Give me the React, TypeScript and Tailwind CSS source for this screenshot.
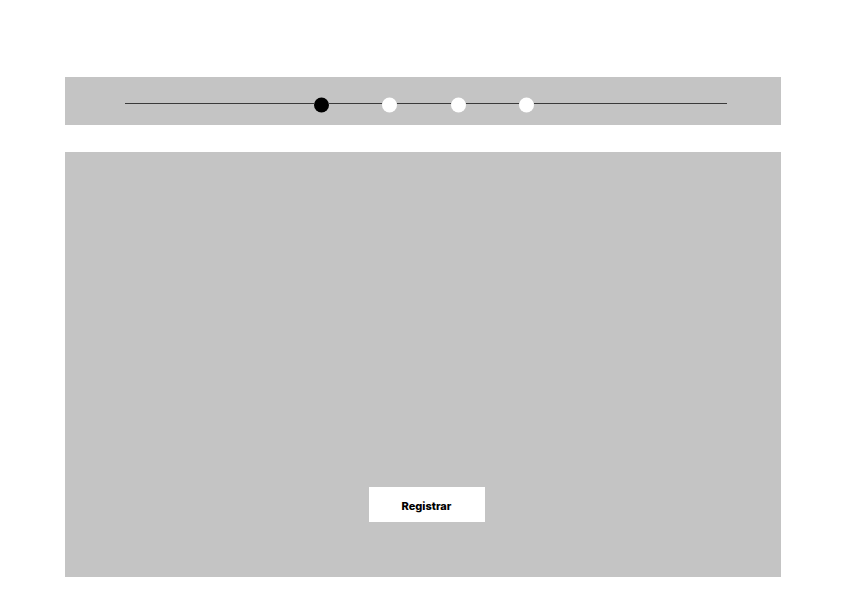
export default function App() {
  return (
    <div className="min-h-screen bg-white pt-[77px]" style={{ fontFamily: 'Inter, "Liberation Sans", sans-serif' }}>
      <div className="mx-[65px] w-[716px]">
        {/* Step progress bar */}
        <div className="flex h-[48px] items-center bg-[#c4c4c4] pl-[60px] pt-[4px]">
          <div className="h-px w-[189px] bg-[#3a3a3a]" />
          <div className="h-[15px] w-[15px] translate-y-[1.5px] rounded-full bg-black" />
          <div className="h-px w-[53px] bg-[#3a3a3a]" />
          <div className="h-[15px] w-[15px] translate-y-[1.5px] rounded-full bg-white" />
          <div className="h-px w-[54px] bg-[#3a3a3a]" />
          <div className="h-[15px] w-[15px] translate-y-[1.5px] rounded-full bg-white" />
          <div className="h-px w-[53px] bg-[#3a3a3a]" />
          <div className="h-[15px] w-[15px] translate-y-[1.5px] rounded-full bg-white" />
          <div className="h-px w-[193px] bg-[#3a3a3a]" />
        </div>

        {/* Form panel */}
        <div className="mt-[27px] flex h-[425px] flex-col items-center justify-end bg-[#c4c4c4] pb-[55px] pl-[7px]">
          <button className="flex h-[35px] w-[116px] items-center justify-center bg-white pt-[3px] text-[11px] font-extrabold text-black">
            Registrar
          </button>
        </div>
      </div>
    </div>
  );
}
